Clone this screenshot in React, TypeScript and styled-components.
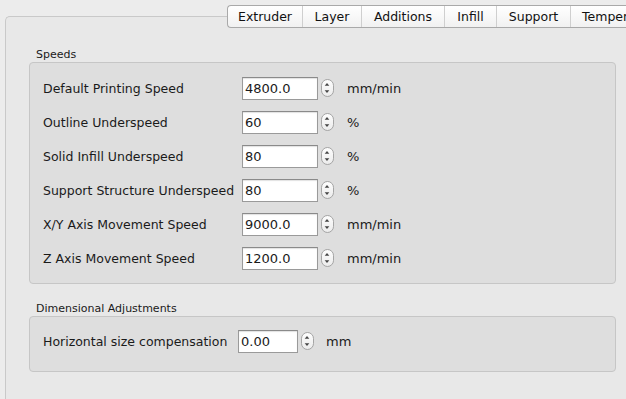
import styled, { createGlobalStyle } from "styled-components";

const Global = createGlobalStyle`
  html, body {
    margin: 0;
    padding: 0;
    background: #ececec;
    font-family: "DejaVu Sans", "Liberation Sans", sans-serif;
    color: #1a1a1a;
  }
`;

const tabs = [
  { name: "Extruder", width: 74 },
  { name: "Layer", width: 58 },
  { name: "Additions", width: 82 },
  { name: "Infill", width: 51 },
  { name: "Support", width: 73 },
  { name: "Temperature", width: 100 },
];

const speeds = [
  { label: "Default Printing Speed", value: "4800.0", unit: "mm/min" },
  { label: "Outline Underspeed", value: "60", unit: "%" },
  { label: "Solid Infill Underspeed", value: "80", unit: "%" },
  { label: "Support Structure Underspeed", value: "80", unit: "%" },
  { label: "X/Y Axis Movement Speed", value: "9000.0", unit: "mm/min" },
  { label: "Z Axis Movement Speed", value: "1200.0", unit: "mm/min" },
];

const Stepper = () => (
  <StepperBox>
    <svg width="13" height="18" viewBox="0 0 13 18">
      <path d="M4 6.5 L6.5 3.5 L9 6.5 Z" fill="#444" />
      <path d="M4 11.5 L6.5 14.5 L9 11.5 Z" fill="#444" />
    </svg>
  </StepperBox>
);

export default function App() {
  return (
    <Window>
      <Global />
      <TabBar>
        {tabs.map((t) => (
          <Tab key={t.name} $width={t.width}>
            {t.name}
          </Tab>
        ))}
      </TabBar>
      <Pane>
        <GroupTitle>Speeds</GroupTitle>
        <Group $pad="8px 0">
          {speeds.map((s) => (
            <Row key={s.label} $labelWidth={199} $rowHeight={34}>
              <Label>{s.label}</Label>
              <Field $width={76}>{s.value}</Field>
              <Stepper />
              <Unit>{s.unit}</Unit>
            </Row>
          ))}
        </Group>
        <GroupTitle>Dimensional Adjustments</GroupTitle>
        <Group $pad="10px 0 16px">
          <Row $labelWidth={195} $rowHeight={28}>
            <Label>Horizontal size compensation</Label>
            <Field $width={60}>0.00</Field>
            <Stepper />
            <Unit $gap={12}>mm</Unit>
          </Row>
        </Group>
      </Pane>
    </Window>
  );
}

const Window = styled.div`
  width: 626px;
  height: 399px;
  overflow: hidden;
  position: relative;
  background: #ececec;
`;

const TabBar = styled.div`
  position: absolute;
  top: 5px;
  left: 227px;
  display: flex;
  height: 21px;
  border: 1px solid #a9a9a9;
  border-right: none;
  border-radius: 4px 0 0 4px;
  background: linear-gradient(#ffffff, #f1f1f1);
  z-index: 1;
  white-space: nowrap;
`;

const Tab = styled.div<{ $width: number }>`
  flex: 0 0 ${(p) => p.$width}px;
  box-sizing: content-box;
  font-size: 12.5px;
  line-height: 21px;
  text-align: center;
  color: #111;
  border-right: 1px solid #cfcfcf;
  &:last-child {
    border-right: none;
    text-align: left;
    padding-left: 11px;
  }
`;

const Pane = styled.div`
  margin: 16px 0 0 5px;
  height: 383px;
  box-sizing: border-box;
  border: 1px solid #c9c9c9;
  border-right: none;
  border-bottom: none;
  border-radius: 5px 0 0 0;
  background: #e8e8e8;
  padding: 31px 10px 0 23px;
`;

const GroupTitle = styled.div`
  font-size: 11px;
  line-height: 13px;
  margin: 0 0 1px 7px;
`;

const Group = styled.div<{ $pad: string }>`
  box-sizing: border-box;
  width: 587px;
  border: 1px solid #c6c6c6;
  border-radius: 4px;
  background: #dedede;
  padding: ${(p) => p.$pad};
  margin-bottom: 18px;
`;

const Row = styled.div<{ $labelWidth: number; $rowHeight: number }>`
  display: grid;
  grid-template-columns: ${(p) => p.$labelWidth}px auto auto auto;
  align-items: center;
  height: ${(p) => p.$rowHeight}px;
  padding-left: 13px;
  justify-content: start;
`;

const Label = styled.div`
  font-size: 12.5px;
  white-space: nowrap;
`;

const Field = styled.div<{ $width: number }>`
  width: ${(p) => p.$width}px;
  height: 23px;
  box-sizing: border-box;
  border: 1px solid #9a9a9a;
  border-top-color: #8a8a8a;
  background: #fff;
  font-size: 13px;
  line-height: 21px;
  padding-left: 2px;
  box-shadow: inset 0 1px 1px rgba(0, 0, 0, 0.12);
`;

const StepperBox = styled.div`
  width: 13px;
  height: 18px;
  margin-left: 3px;
  box-sizing: border-box;
  border: 1px solid #a5a5a5;
  border-radius: 7px;
  background: linear-gradient(#fdfdfd, #ececec);
  display: flex;
  align-items: center;
  justify-content: center;
  svg {
    display: block;
    margin-left: -1px;
  }
`;

const Unit = styled.div<{ $gap?: number }>`
  font-size: 13px;
  margin-left: ${(p) => p.$gap ?? 13}px;
`;
